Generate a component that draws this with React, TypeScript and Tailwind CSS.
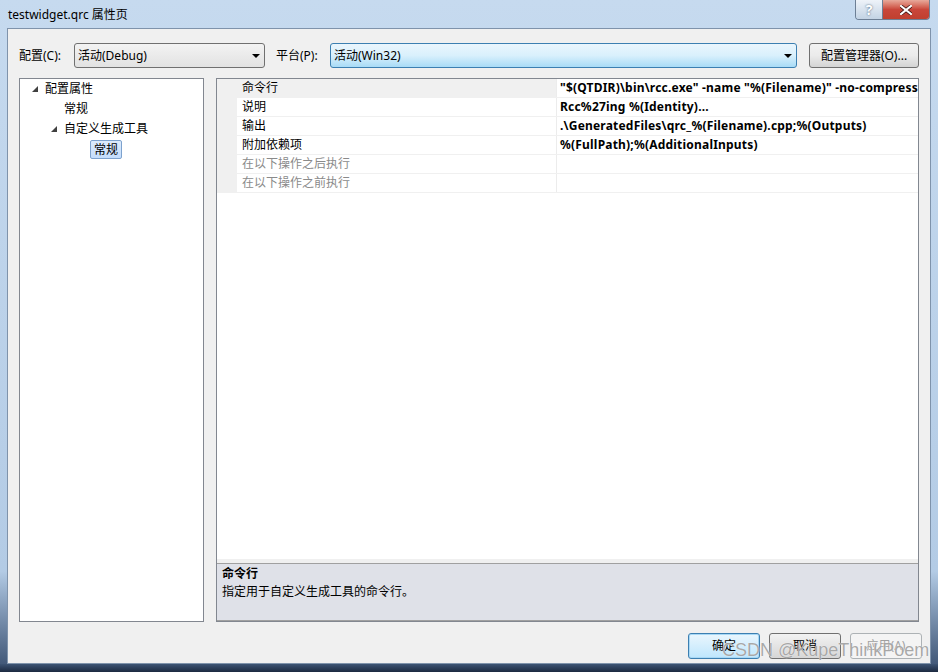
import React from "react";

const ui = "font-['Noto_Sans','Noto_Sans_CJK_SC',sans-serif]";

const rows = [
  { name: "命令行", value: "\"$(QTDIR)\\bin\\rcc.exe\" -name \"%(Filename)\" -no-compress \"%(FullPath)\" -o .\\GeneratedFiles\\qrc_%(Filename).cpp", selected: true },
  { name: "说明", value: "Rcc%27ing %(Identity)..." },
  { name: "输出", value: ".\\GeneratedFiles\\qrc_%(Filename).cpp;%(Outputs)" },
  { name: "附加依赖项", value: "%(FullPath);%(AdditionalInputs)" },
  { name: "在以下操作之后执行", value: "", muted: true },
  { name: "在以下操作之前执行", value: "", muted: true },
];

function Expander() {
  return (
    <svg width="6" height="6" viewBox="0 0 6 6" className="shrink-0">
      <polygon points="6,0 6,6 0,6" fill="#404040" />
    </svg>
  );
}

function ComboArrow() {
  return (
    <svg width="8" height="4" viewBox="0 0 8 4" className="shrink-0">
      <polygon points="0,0 8,0 4,4" fill="#000" />
    </svg>
  );
}

function TreeRow({ depth, label, expander, selected }: { depth: number; label: string; expander?: boolean; selected?: boolean }) {
  const indent = ["pl-[12px]", "pl-[31px]", "pl-[59px]"][depth];
  return (
    <div className={`flex h-[20px] items-center ${indent}`}>
      <div className="flex w-[13px] items-center">{expander && <Expander />}</div>
      {selected ? (
        <span className="ml-[-2px] rounded-[2px] border border-[#7da2ce] bg-gradient-to-b from-[#dcebfc] to-[#c4ddfc] px-[3px] leading-[17px]">{label}</span>
      ) : (
        <span className="leading-[18px]">{label}</span>
      )}
    </div>
  );
}

function Button({ children, focused, disabled }: { children: React.ReactNode; focused?: boolean; disabled?: boolean }) {
  return (
    <div
      className={`flex h-[26px] w-[72px] items-center justify-center rounded-[3px] border ${
        focused
          ? "border-[#3c7fb1] bg-gradient-to-b from-[#eaf6fd] to-[#bee6fd] shadow-[inset_0_0_0_1px_#a8d8f5]"
          : disabled
          ? "border-[#adb2b5] bg-[#f4f4f4] text-[#a0a0a0]"
          : "border-[#707070] bg-gradient-to-b from-[#f2f2f2] to-[#d6d6d6]"
      }`}
    >
      {children}
    </div>
  );
}

export default function App() {
  return (
    <div className={`relative flex h-[672px] w-[938px] flex-col overflow-hidden bg-gradient-to-b from-[#c6daef] via-[#b3cbe5] via-85% to-[#3a5070] text-[12px] text-black ${ui}`}>
      {/* title bar */}
      <div className="flex h-[28px] shrink-0 items-start">
        <div className="pl-[8px] pt-[6px] leading-[18px]">testwidget.qrc 属性页</div>
        <div className="ml-auto mr-[8px] flex h-[20px] overflow-hidden rounded-b-[4px] border border-t-0 border-[#6d7f95]">
          <div className="flex w-[27px] items-center justify-center border-r border-[#6d7f95] bg-gradient-to-b from-[#eef3f9] to-[#c3d3e4] text-[14px] font-bold leading-none text-white [text-shadow:0_0_2px_#36506e]">?</div>
          <div className="flex w-[46px] items-center justify-center bg-gradient-to-b from-[#e7a99b] via-[#c9463a] to-[#c0402f]">
            <svg width="12" height="10" viewBox="0 0 12 10">
              <path d="M1 1 L11 9 M11 1 L1 9" stroke="#3a1410" strokeWidth="3.6" strokeLinecap="square" />
              <path d="M1 1 L11 9 M11 1 L1 9" stroke="#fff" strokeWidth="2.2" strokeLinecap="square" />
            </svg>
          </div>
        </div>
      </div>

      {/* client area */}
      <div className="mx-[7px] flex flex-1 flex-col border border-[#7f93ab] bg-[#f0f0f0] px-[11px] pt-[14px]">
        <div className="flex h-[25px] items-center">
          <span className="w-[55px]">配置(C):</span>
          <div className="flex h-[25px] w-[191px] items-center justify-between rounded-[3px] border border-[#707070] bg-gradient-to-b from-[#f3f3f3] to-[#e2e2e2] pl-[3px] pr-[4px]">
            <span>活动(Debug)</span>
            <ComboArrow />
          </div>
          <span className="ml-[11px] w-[54px]">平台(P):</span>
          <div className="flex h-[25px] w-[467px] items-center justify-between rounded-[3px] border border-[#3c7fb1] bg-gradient-to-b from-[#eaf6fd] via-[#d9f0fc] to-[#a8dbf6] pl-[3px] pr-[4px]">
            <span>活动(Win32)</span>
            <ComboArrow />
          </div>
          <div className="ml-[12px] flex h-[25px] w-[110px] items-center justify-center rounded-[3px] border border-[#707070] bg-gradient-to-b from-[#f2f2f2] via-[#ebebeb] to-[#d4d4d4]">
            配置管理器(O)...
          </div>
        </div>

        <div className="mt-[10px] flex h-[544px] gap-[12px]">
          {/* tree */}
          <div className="w-[186px] border border-[#828790] bg-white">
            <TreeRow depth={0} label="配置属性" expander />
            <TreeRow depth={1} label="常规" />
            <TreeRow depth={1} label="自定义生成工具" expander />
            <TreeRow depth={2} label="常规" selected />
          </div>

          {/* property grid */}
          <div className="flex w-[703px] flex-col border border-[#828790] bg-[#f0f0f0]">
            <div className="flex-1 bg-white">
              {rows.map((r) => (
                <div key={r.name} className="flex h-[19px] border-b border-[#f0f0f0]">
                  <div className="w-[20px] shrink-0 bg-[#f0f0f0]" />
                  <div className={`flex w-[320px] shrink-0 items-center border-r border-[#ececec] pl-[5px] ${r.selected ? "bg-[#f0f0f0]" : ""} ${r.muted ? "text-[#8a8a8a]" : ""}`}>
                    {r.name}
                  </div>
                  <div className="flex min-w-0 flex-1 items-center overflow-hidden whitespace-nowrap pl-[3px] font-bold tracking-[0.2px]">
                    {r.value}
                  </div>
                </div>
              ))}
            </div>
            <div className="mt-[4px] h-[58px] border-y border-[#a0a0a0] bg-[#dfe1e8] px-[5px] pt-[1px]">
              <div className="font-bold leading-[18px]">命令行</div>
              <div className="leading-[18px]">指定用于自定义生成工具的命令行。</div>
            </div>
          </div>
        </div>

        <div className="mr-[-3px] mt-[11px] flex justify-end gap-[9px]">
          <Button focused>确定</Button>
          <Button>取消</Button>
          <Button disabled>应用(A)</Button>
        </div>
      </div>
      <div className="h-[8px] shrink-0 bg-gradient-to-b from-[#3d5474] to-[#1c2a40]" />

      {/* watermark */}
      <div className="pointer-events-none absolute left-[722px] top-[639px] whitespace-nowrap font-['Liberation_Sans',sans-serif] text-[18px] leading-[22px] text-[#8c8c8c]/75 [text-shadow:0_0_1px_#fff]">
        CSDN @KupeThinkPoem
      </div>
    </div>
  );
}
